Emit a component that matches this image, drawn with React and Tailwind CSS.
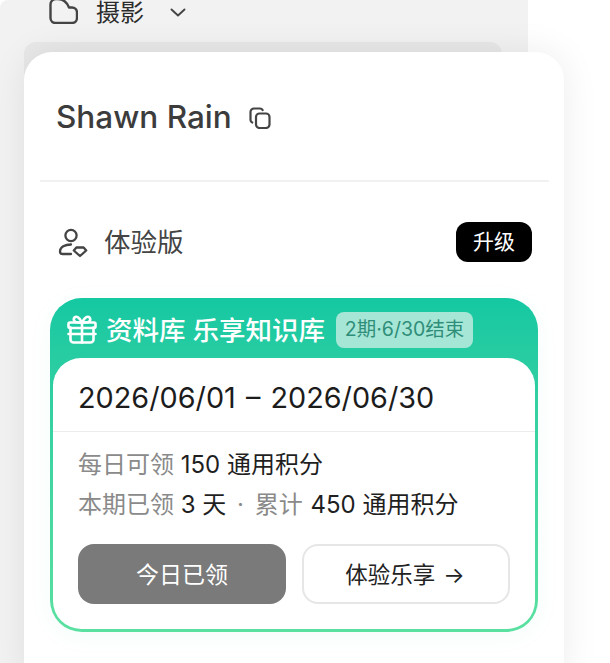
import React from "react";

const FONT = "font-['Inter','Noto_Sans_CJK_SC',sans-serif]";

function FolderIcon() {
  return (
    <svg width="30" height="30" viewBox="0 0 30 30" fill="none" stroke="#444" strokeWidth="2.4" strokeLinecap="round" strokeLinejoin="round" className="-mt-[8px] shrink-0">
      <path d="M2.5 11v13a5 5 0 0 0 5 5h16.5a5 5 0 0 0 5-5v-5.5a5 5 0 0 0-5-5h-3C19 8.5 15 5 10 5H8a5.5 5.5 0 0 0-5.5 6Z" />
    </svg>
  );
}

function CopyIcon() {
  return (
    <svg width="22" height="22" viewBox="0 0 22 22" fill="none" stroke="#444" strokeWidth="2.2" strokeLinecap="round" strokeLinejoin="round" className="shrink-0">
      <rect x="7" y="6.5" width="13.5" height="14.5" rx="3.5" />
      <path d="M3.2 15.5A2.6 2.6 0 0 1 1.5 13V5a3.5 3.5 0 0 1 3.5-3.5h6a3 3 0 0 1 2.6 1.6" />
    </svg>
  );
}

function MemberIcon() {
  return (
    <svg width="30" height="30" viewBox="0 0 30 30" fill="none" stroke="#444" strokeWidth="2.3" strokeLinecap="round" strokeLinejoin="round" className="shrink-0">
      <circle cx="13" cy="7.5" r="5.6" />
      <path d="M13 16.5c-6 0-11 2.5-11 7 0 1.6 1 2.5 2.5 2.5H13" />
      <path d="M18.4 19.5h7.2l2.6 3-6.2 5.5-6.2-5.5 2.6-3Z" />
    </svg>
  );
}

function GiftIcon() {
  return (
    <svg width="30" height="30" viewBox="0 0 30 30" fill="none" stroke="#fff" strokeWidth="2.6" strokeLinecap="round" strokeLinejoin="round" className="shrink-0">
      <path d="M3.5 12.5v12a3 3 0 0 0 3 3h17a3 3 0 0 0 3-3v-12" />
      <rect x="1.5" y="7.5" width="27" height="5.5" rx="1.5" />
      <path d="M1.5 19h27M15 7.5v20" />
      <path d="M15 7.5C12 1.5 9 1 7.5 2.5 6 4 7 7.5 10 7.5h5ZM15 7.5c3-6 6-6.5 7.5-5 1.5 1.5.5 5-2.5 5h-5Z" />
    </svg>
  );
}

function Chevron() {
  return (
    <svg width="16" height="9" viewBox="0 0 16 9" fill="none" stroke="#444" strokeWidth="1.9" strokeLinecap="round" strokeLinejoin="round">
      <path d="M1.5 1.5 8 7.5l6.5-6" />
    </svg>
  );
}

export default function App() {
  return (
    <div className={`relative h-[663px] w-[610px] overflow-hidden bg-white ${FONT}`}>
      <div className="h-full w-[528px] rounded-tl-[8px] bg-[#f2f2f2]">
        <div className="flex h-[42px] items-center pb-[16px] pl-[48px]">
          <FolderIcon />
          <span className="ml-[18px] text-[24px] leading-none text-[#2c2c2c]">摄影</span>
          <span className="ml-[26px] -mt-[2px]"><Chevron /></span>
        </div>
        <div className="ml-[24px] h-[60px] w-[478px] rounded-[12px] bg-[#e8e8e8]" />
      </div>

      <div className="absolute left-[24px] top-[52px] h-[640px] w-[540px] rounded-[28px] bg-white shadow-[0_0_36px_rgba(0,0,0,0.08)]">
        <div className="flex h-[129px] items-center pl-[32px] pt-[1px]">
          <span className="text-[31.5px] font-medium leading-none text-[#3c3c3c]">Shawn Rain</span>
          <span className="ml-[17px] mt-[2px]"><CopyIcon /></span>
        </div>
        <div className="mx-[16px] -mt-[1px] h-[2px] w-[509px] bg-[#f1f1f1]" />
        <div className="flex h-[116px] items-center pl-[34px] pr-[32px] pt-[5px]">
          <MemberIcon />
          <span className="ml-[16px] text-[26.5px] leading-none text-[#444]">体验版</span>
          <span className="ml-auto -mt-[2px] flex h-[40px] w-[76px] items-center justify-center rounded-[12px] bg-black text-[21px] text-white">升级</span>
        </div>

        <div className="mx-[26px] h-[334px] w-[488px] rounded-[32px] bg-gradient-to-b from-[#13c8a2] to-[#5ae0a0] p-[3px] pt-0 shadow-[0_4px_24px_rgba(40,200,160,0.05)]">
          <div className="flex h-[60px] items-center pl-[14px] pt-[4px]">
            <GiftIcon />
            <span className="ml-[9px] text-[26.5px] font-medium leading-none text-white">资料库 乐享知识库</span>
            <span className="ml-[11px] flex h-[36px] w-[137px] items-center justify-center rounded-[8px] bg-[#a6e6d6] text-[19.5px] text-[#2f8e79]">2期·6/30结束</span>
          </div>
          <div className="h-[271px] rounded-[28px] bg-white">
            <div className="flex h-[74px] items-center border-b border-[#ececec] pl-[25px] pt-[7px] text-[28.8px] leading-none text-[#1c1c1c] [word-spacing:2px]">
              2026/06/01 – 2026/06/30
            </div>
            <div className="pl-[25px] pt-[13px] text-[24px] leading-[40px] text-[#1f1f1f]">
              <div><span className="text-[#8a8a8a]">每日可领</span> 150 通用积分</div>
              <div><span className="text-[#8a8a8a]">本期已领</span> 3 天 <span className="mx-[4px] text-[#8a8a8a]">·</span> <span className="mr-[1px] text-[#8a8a8a]">累计</span> 450 通用积分</div>
            </div>
            <div className="mt-[19px] flex gap-[16px] pl-[25px]">
              <button className="h-[60px] w-[208px] rounded-[16px] bg-[#7a7a7a] pt-[2px] text-[23px] text-white">今日已领</button>
              <button className="flex h-[60px] w-[208px] items-center justify-center gap-[8px] rounded-[16px] border-2 border-[#e6e6e6] bg-white pr-[2px] pt-[2px] text-[22.5px] text-[#222]">
                体验乐享 <span>→</span>
              </button>
            </div>
          </div>
        </div>
      </div>
    </div>
  );
}
